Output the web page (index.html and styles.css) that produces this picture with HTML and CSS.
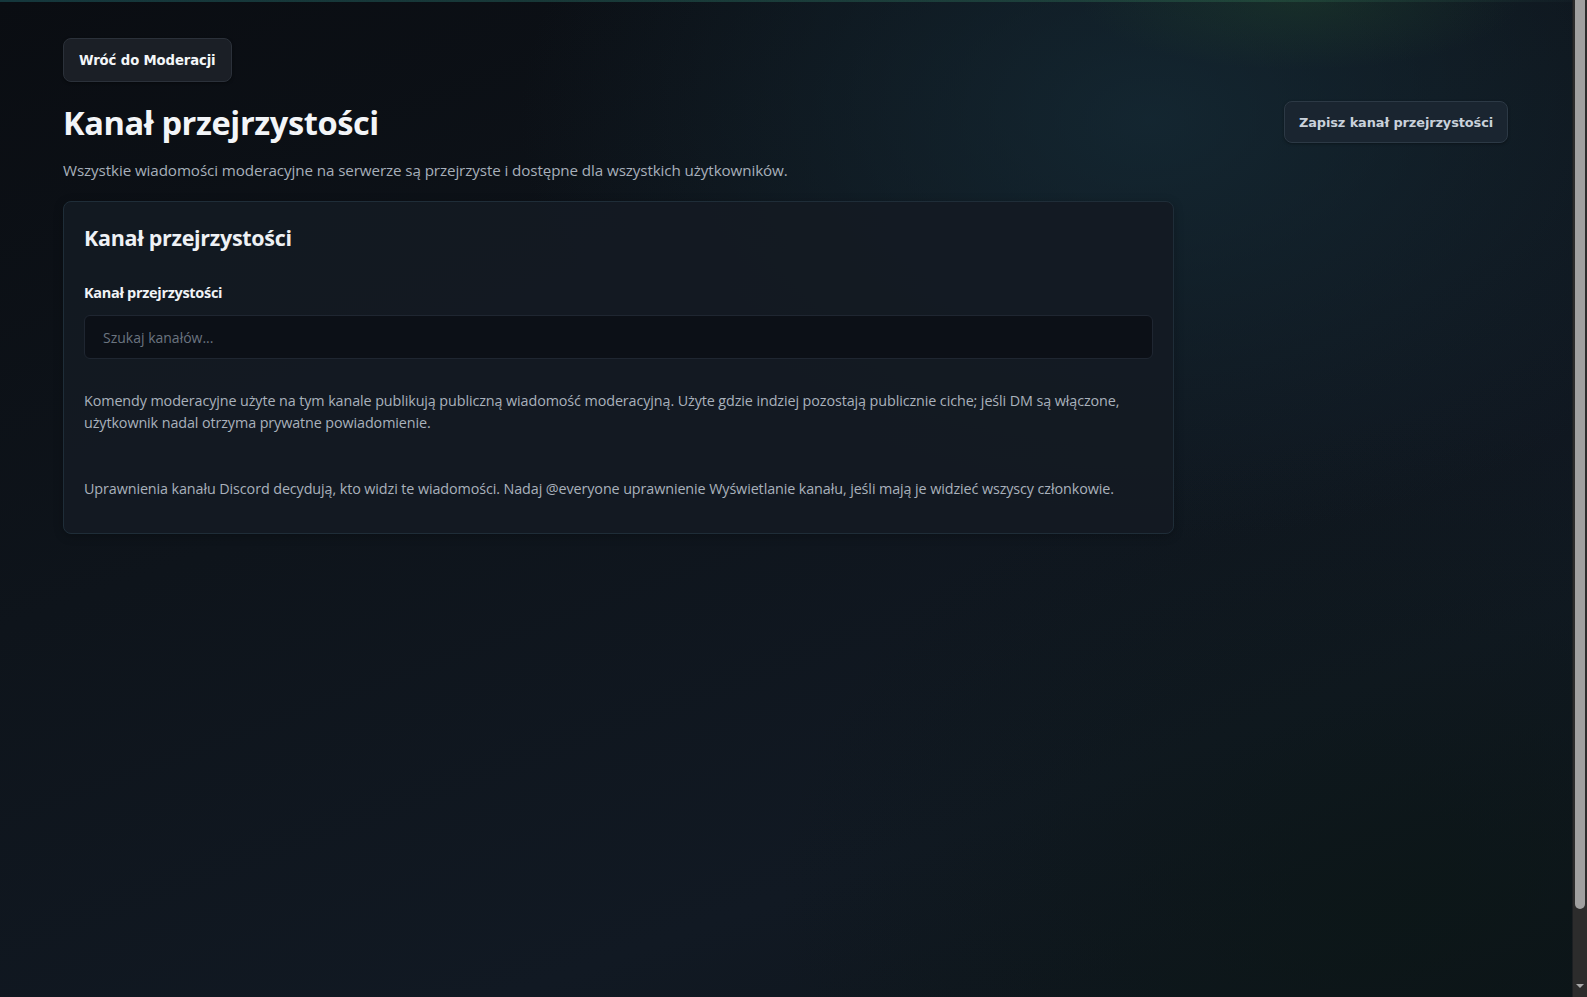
FILE: index.html
```html
<!DOCTYPE html>
<html lang="pl">
<head>
<meta charset="utf-8">
<title>Kanał przejrzystości</title>
<link rel="stylesheet" href="styles.css">
</head>
<body>
<div class="page">
  <a class="btn btn-back" href="#">Wróć do Moderacji</a>

  <header class="head">
    <h1 class="title">Kanał przejrzystości</h1>
    <button class="btn btn-save" type="button">Zapisz kanał przejrzystości</button>
  </header>
  <p class="lead">Wszystkie wiadomości moderacyjne na serwerze są przejrzyste i dostępne dla wszystkich użytkowników.</p>

  <section class="card">
    <h2 class="card-title">Kanał przejrzystości</h2>
    <label class="field-label" for="channel">Kanał przejrzystości</label>
    <input class="field-input" id="channel" type="text" placeholder="Szukaj kanałów...">
    <p class="note">Komendy moderacyjne użyte na tym kanale publikują publiczną wiadomość moderacyjną. Użyte gdzie indziej pozostają publicznie ciche; jeśli DM są włączone, użytkownik nadal otrzyma prywatne powiadomienie.</p>
    <p class="note note-spaced">Uprawnienia kanału Discord decydują, kto widzi te wiadomości. Nadaj @everyone uprawnienie Wyświetlanie kanału, jeśli mają je widzieć wszyscy członkowie.</p>
  </section>
</div>

<div class="scroll-rail" aria-hidden="true">
  <div class="scroll-thumb"></div>
  <div class="scroll-arrow"></div>
</div>
</body>
</html>
```

FILE: styles.css
```css
html,
body {
  height: 100%;
}

body {
  margin: 0;
  overflow: hidden;
  font-family: "Open Sans", "Noto Sans", sans-serif;
  color: #e8ecf1;
  background:
    linear-gradient(90deg, rgba(30, 90, 95, 0.55), rgba(40, 90, 70, 0.55) 80%, rgba(20, 30, 40, 0.4)) top / 100% 2px no-repeat,
    radial-gradient(ellipse 220px 70px at 1300px 0px, rgba(40, 85, 45, 0.28), transparent 100%),
    radial-gradient(ellipse 900px 600px at 1150px 120px, rgba(22, 46, 58, 0.7), transparent 70%),
    radial-gradient(ellipse 900px 700px at 1400px 900px, rgba(10, 22, 20, 0.6), transparent 70%),
    linear-gradient(160deg, #0a0d12 0%, #0e141b 40%, #111923 75%, #0e151b 100%);
  background-color: #0d1218;
}

.page {
  box-sizing: border-box;
  padding: 38px 79px 40px 63px;
  display: flex;
  flex-direction: column;
  align-items: flex-start;
}

.btn {
  display: inline-flex;
  align-items: center;
  justify-content: center;
  font-family: "DejaVu Sans", Verdana, sans-serif;
  font-weight: 700;
  text-decoration: none;
  border-radius: 8px;
  cursor: pointer;
  box-sizing: border-box;
}

.btn-back {
  height: 44px;
  padding: 0 15px;
  font-size: 13.2px;
  letter-spacing: -0.1px;
  color: #f4f6f8;
  background: #1b1f26;
  border: 1px solid #2b313a;
  box-shadow: 0 1px 3px rgba(0, 0, 0, 0.4);
}

.head {
  align-self: stretch;
  margin-top: 19px;
  display: flex;
  align-items: center;
  justify-content: space-between;
}

.title {
  margin: 0;
  font-size: 32.6px;
  line-height: 41px;
  font-weight: 700;
  letter-spacing: -0.4px;
  color: #f3f5f8;
}

.btn-save {
  height: 42px;
  padding: 0 14px;
  font-size: 12.9px;
  letter-spacing: -0.1px;
  color: #c9d1da;
  background: #1a2530;
  border: 1px solid #2c3945;
  box-shadow: 0 1px 3px rgba(0, 0, 0, 0.35);
}

.lead {
  margin: 16px 0 0;
  font-size: 15.2px;
  line-height: 22px;
  color: #a7afba;
  letter-spacing: -0.1px;
}

.card {
  align-self: stretch;
  max-width: 1111px;
  box-sizing: border-box;
  margin-top: 20px;
  padding: 21px 20px 33px;
  display: flex;
  flex-direction: column;
  background: rgba(20, 26, 35, 0.92);
  border: 1px solid #1f2d38;
  border-radius: 8px;
  box-shadow: 0 2px 10px rgba(0, 0, 0, 0.25);
}

.card-title {
  margin: 0;
  font-size: 21.5px;
  line-height: 30px;
  font-weight: 700;
  letter-spacing: -0.3px;
  color: #eef1f5;
}

.field-label {
  margin-top: 30px;
  font-size: 14.5px;
  line-height: 20px;
  font-weight: 700;
  letter-spacing: -0.3px;
  color: #f0f3f6;
}

.field-input {
  margin-top: 12px;
  height: 44px;
  box-sizing: border-box;
  padding: 0 18px;
  font-family: inherit;
  font-size: 14px;
  color: #d6dce3;
  background: #0c1017;
  border: 1px solid #1f2631;
  border-radius: 6px;
  outline: none;
}

.field-input::placeholder {
  color: #6b7480;
}

.note {
  margin: 31px 0 0;
  font-size: 14.35px;
  line-height: 22px;
  color: #a9b1bc;
  letter-spacing: -0.1px;
}

.note-spaced {
  margin-top: 44px;
}

/* window scrollbar rail, pinned over the right edge */
.scroll-rail {
  position: fixed;
  top: 0;
  right: 0;
  bottom: 0;
  width: 15px;
  background: #2c2c2c;
  border-left: 1px solid #1c1f22;
  box-sizing: border-box;
}

.scroll-thumb {
  position: absolute;
  top: 0;
  left: 2px;
  width: 10px;
  height: 909px;
  background: #a0a0a0;
  border-radius: 0 0 5px 5px;
}

.scroll-arrow {
  position: absolute;
  left: 3px;
  bottom: 9px;
  width: 0;
  height: 0;
  border-left: 4px solid transparent;
  border-right: 4px solid transparent;
  border-top: 4px solid #a8a8a8;
}
```
